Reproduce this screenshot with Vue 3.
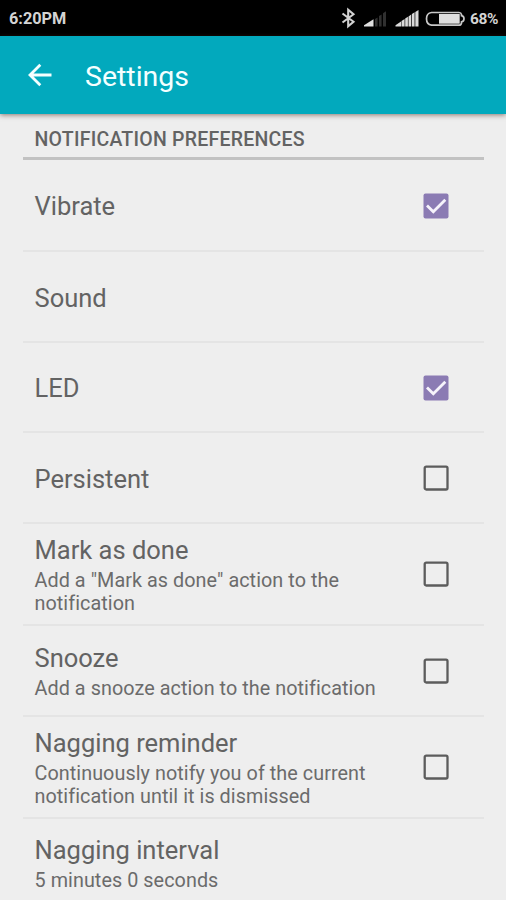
<script setup>
const rows = [
  { title: 'Vibrate', checked: true, height: 92 },
  { title: 'Sound', checked: null, height: 91 },
  { title: 'LED', checked: true, height: 90 },
  { title: 'Persistent', checked: false, height: 91 },
  { title: 'Mark as done', summary: ['Add a "Mark as done" action to the', 'notification'], checked: false, height: 102 },
  { title: 'Snooze', summary: ['Add a snooze action to the notification'], checked: false, height: 91 },
  { title: 'Nagging reminder', summary: ['Continuously notify you of the current', 'notification until it is dismissed'], checked: false, height: 102 },
  { title: 'Nagging interval', summary: ['5 minutes 0 seconds'], checked: null, height: 90 },
]
</script>

<template>
  <div class="screen">
    <div class="status">
      <span class="time">6:20PM</span>
      <svg class="tray" width="128" height="24" viewBox="0 0 128 24">
        <path d="M4.500 7.500 15.500 15.700 10.200 20.300V3.700l5.300 4.600L4.500 16.500" fill="none" stroke="#d2d2d2" stroke-width="2.100" />
        <path d="M26 20.500V19.300l9.500-6v7.200z" fill="#e0e0e0" />
        <path d="M37 20.500v-7.500l2.600-1.500v9zM41 20.500V10l2.600-1.600v12.100zM45 20.500V7.300l3-2v15.200z" fill="#303030" />
        <path d="M57.500 20.500V19.200l5.500-3.700v5zM63.500 20.500v-5.400l3.100-2v7.400zM67.200 20.500v-7.900l2.700-1.800v9.700zM70.500 20.500V10.400l2.700-1.800v11.900zM73.900 20.500V8.100l2.700-1.800v14.200zM77.300 20.500V5.900L80.500 4v16.500z" fill="#dadada" />
        <path d="M93.500 6.500H121q2 0 2.500 2v1.200q2.500.5 2.500 3.100t-2.500 3.100V17q-.5 2.200-2.500 2.200H93.500Q88.500 18.500 88.500 12.800T93.500 6.500z" fill="none" stroke="#c8c8c8" stroke-width="1.700" />
        <path d="M101 8h20.700v9.700H101z" fill="#dedede" />
      </svg>
      <span class="percent">68%</span>
    </div>
    <header class="bar">
      <svg class="back" width="24" height="24" viewBox="0 0 24 24">
        <path d="M23.500 12H2M12.300 1.700 2 12l10.300 10.300" fill="none" stroke="#f4ffff" stroke-width="2.800" />
      </svg>
      <h1>Settings</h1>
    </header>
    <main>
      <h2>NOTIFICATION PREFERENCES</h2>
      <div v-for="row in rows" :key="row.title" class="row" :class="{ detailed: row.summary }" :style="{ height: row.height + 'px' }">
        <div class="text">
          <div class="title">{{ row.title }}</div>
          <div v-for="line in row.summary" :key="line" class="summary">{{ line }}</div>
        </div>
        <svg v-if="row.checked !== null" class="box" width="26" height="26" viewBox="0 0 26 26">
          <template v-if="row.checked">
            <rect x="0.500" y="0.500" width="25" height="25" rx="2" fill="#8b7bb3" />
            <path d="M4 12.500 10.300 18.800 22.300 6.800" fill="none" stroke="#f6f3fb" stroke-width="2.800" />
          </template>
          <rect v-else x="1.700" y="1.700" width="22.800" height="22.800" rx="1.500" fill="none" stroke="#5c5c5c" stroke-width="2.300" />
        </svg>
      </div>
    </main>
  </div>
</template>

<style>
body { background: #eee; overflow: hidden; }
</style>

<style scoped>
.screen {
  height: 900px;
  overflow: hidden;
  display: flex;
  flex-direction: column;
  background: #eee;
  font-family: Roboto, sans-serif;
  color: #636363;
}
.status {
  flex: none;
  height: 36px;
  box-sizing: border-box;
  display: flex;
  align-items: center;
  padding: 1px 8px 0 9px;
  background: #000;
  color: #d4d4d4;
  font-weight: 700;
  font-size: 16.300px;
}
.tray { margin-left: auto; margin-top: -1px; }
.percent { width: 28px; margin-left: 4px; font-size: 15.500px; letter-spacing: -0.4px; white-space: nowrap; }
.bar {
  flex: none;
  height: 78px;
  box-sizing: border-box;
  display: flex;
  align-items: center;
  gap: 33px;
  padding: 3px 28px 0;
  background: #02a9bd;
  box-shadow: 0 1px 5px rgba(70, 35, 25, 0.6);
}
.back { margin-top: -4px; }
h1 { margin: 0; color: #f4ffff; font-size: 28.500px; font-weight: 400; line-height: 34px; }
main { padding: 0 22px 0 23px; }
h2 {
  height: 46px;
  box-sizing: border-box;
  margin: 0;
  padding: 13px 0 0 11.500px;
  border-bottom: 3px solid #c2c2c2;
  font-size: 19.500px;
  font-weight: 500;
  letter-spacing: 0.240px;
  line-height: 25px;
}
.row {
  box-sizing: border-box;
  display: flex;
  align-items: center;
  justify-content: space-between;
  padding: 1px 35px 0 11.500px;
  border-bottom: 2px solid #e4e4e4;
}
.row.detailed { padding-top: 0; }
.title { padding-top: 1px; font-size: 25.500px; line-height: 30px; white-space: nowrap; }
.detailed .title { margin-bottom: 4px; }
.summary { font-size: 19.800px; letter-spacing: 0.060px; line-height: 23px; white-space: nowrap; color: #6b6b6b; }
.box { flex: none; }
</style>
